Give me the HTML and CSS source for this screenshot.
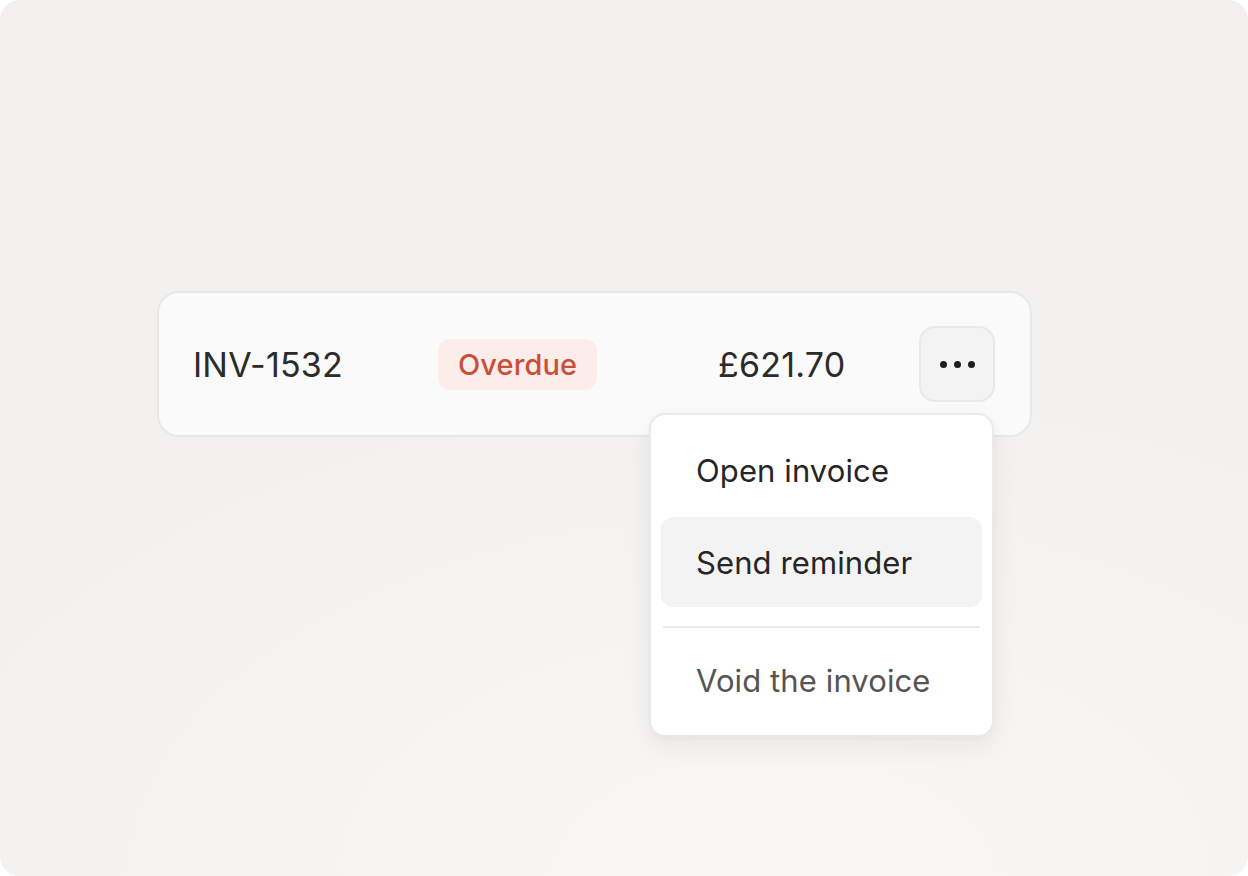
FILE: index.html
```html
<!DOCTYPE html>
<html lang="en">
<head>
<meta charset="utf-8">
<title>Invoice row menu</title>
<link rel="stylesheet" href="styles.css">
</head>
<body>
<div class="frame">
  <div class="row">
    <div class="inv-id">INV-1532</div>
    <div class="status"><span class="badge">Overdue</span></div>
    <div class="amount">£621.70</div>
    <div class="actions">
      <button class="kebab" aria-label="More actions">
        <span class="dot"></span><span class="dot"></span><span class="dot"></span>
      </button>
      <div class="menu">
        <div class="menu-item">Open invoice</div>
        <div class="menu-item active">Send reminder</div>
        <div class="divider"></div>
        <div class="menu-item muted">Void the invoice</div>
      </div>
    </div>
  </div>
</div>
</body>
</html>
```

FILE: styles.css
```css
* { box-sizing: border-box; }
html, body { margin: 0; padding: 0; background: #ffffff; }
body { font-family: Inter, "Noto Sans", "Liberation Sans", sans-serif; color: #2a2a2a; }

.frame {
  width: 1248px;
  height: 876px;
  border-radius: 20px;
  overflow: hidden;
  background:
    radial-gradient(ellipse 75% 60% at 62% 100%, #f8f7f5 0%, #f6f5f3 35%, #f2f1ef 100%);
  background-color: #f2f1ef;
  padding: 291px 0 0 157px;
}

.row {
  width: 875px;
  height: 146px;
  border: 2px solid #e7e8ea;
  border-radius: 22px;
  background: #fafafa;
  padding: 0 35px 0 34px;
  display: grid;
  grid-template-columns: 245px 280px 1fr 76px;
  align-items: center;
}

.inv-id, .amount {
  font-size: 34px;
  letter-spacing: 0.2px;
  color: #2b2b2b;
}

.badge {
  display: inline-flex;
  align-items: center;
  height: 51px;
  padding: 0 20px;
  border-radius: 12px;
  background: #fdedea;
  color: #c8503a;
  font-size: 29px;
  font-weight: 500;
  letter-spacing: 0.1px;
}

.actions { position: relative; width: 76px; height: 76px; }

.kebab {
  width: 76px;
  height: 76px;
  border: 2px solid #e8e8e8;
  border-radius: 16px;
  background: #f3f3f3;
  display: flex;
  align-items: center;
  justify-content: center;
  gap: 7px;
  padding: 0;
  cursor: pointer;
}
.dot { width: 7px; height: 7px; border-radius: 50%; background: #1e1e1e; }

.menu {
  position: absolute;
  top: 87px;
  right: 1px;
  width: 345px;
  background: #ffffff;
  border: 2px solid #eaeaea;
  border-radius: 16px;
  padding: 10px;
  box-shadow: 0 10px 28px rgba(0, 0, 0, 0.06), 0 2px 6px rgba(0, 0, 0, 0.03);
  display: flex;
  flex-direction: column;
  gap: 2px;
}

.menu-item {
  height: 90px;
  display: flex;
  align-items: center;
  padding-left: 35px;
  border-radius: 12px;
  font-size: 31px;
  letter-spacing: 0.1px;
  color: #262626;
}
.menu-item.active { background: #f3f3f3; }
.menu-item.muted { color: #555555; }

.divider {
  height: 2px;
  background: #ebebeb;
  margin: 17px 2px 5px;
}
```
